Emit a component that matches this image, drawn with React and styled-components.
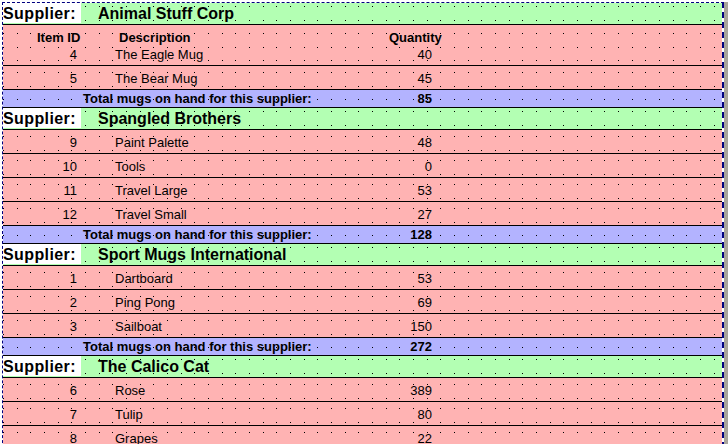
import React from "react";
import styled, { createGlobalStyle } from "styled-components";

const GlobalStyle = createGlobalStyle`
  html, body {
    margin: 0;
    padding: 0;
    height: 444px;
    overflow: hidden;
    background: #fff;
  }
  body {
    font-family: "Liberation Sans", Arial, sans-serif;
    color: #000;
  }
`;

// design-view dot grid, 7 dots per inch
const dotGrid = `url("data:image/svg+xml,%3Csvg xmlns='http://www.w3.org/2000/svg' width='41' height='41' shape-rendering='crispEdges'%3E%3Cpath d='M0 0h1v1H0zM14 0h1v1h-1zM27 0h1v1h-1zM0 14h1v1H0zM14 14h1v1h-1zM27 14h1v1h-1zM0 27h1v1H0zM14 27h1v1h-1zM27 27h1v1h-1z'/%3E%3C/svg%3E")`;

const tones = {
  green: "#b3ffb3",
  pink: "#ffb3b3",
  blue: "#b3b3ff",
};

const Shell = styled.div`
  display: flex;
  margin-top: 2px;
`;

const Report = styled.div`
  width: 719px;
  margin-left: 2px;
  border-top: 1px dashed #000080;
  border-left: 1px dashed #000080;
  border-right: 2px dashed #000080;
`;

const Gutter = styled.div`
  flex: 1;
  background: #a8a49c;
`;

const Section = styled.div`
  background-color: ${p => tones[p.$tone]};
  background-image: ${dotGrid};
  background-repeat: repeat;
  background-position: 0 ${p => p.$dotY}px;
  border-bottom: 1px solid #000;
`;

const Band = styled(Section)`
  display: flex;
  height: 21px;
`;

const SupplierLabel = styled.div`
  width: 78px;
  height: 20px;
  background: #fff;
  font-size: 16px;
  font-weight: bold;
  letter-spacing: 0.4px;
  line-height: 19px;
  padding-top: 1px;
  box-sizing: border-box;
  white-space: nowrap;
`;

const SupplierName = styled.div`
  padding-left: 17px;
  font-size: 16px;
  font-weight: bold;
  line-height: 19px;
  padding-top: 1px;
  white-space: nowrap;
`;

const ColumnHeader = styled.div`
  display: flex;
  height: 17px;
  box-sizing: border-box;
  padding: 5px 0 0 34px;
  font-size: 13px;
  font-weight: bold;
  line-height: 15px;
  white-space: nowrap;
`;

const HeadCell = styled.div`
  width: ${p => (p.$w ? `${p.$w}px` : "auto")};
`;

const ItemRow = styled.div`
  display: grid;
  grid-template-columns: 74px 38px 265px 52px;
  height: 23px;
  box-sizing: border-box;
  padding-top: 2px;
  font-size: 13px;
  line-height: 21px;
  white-space: nowrap;
`;

const Cell = styled.div`
  grid-column: ${p => p.$col};
  text-align: ${p => p.$align || "left"};
`;

const TotalRow = styled(Section)`
  display: grid;
  grid-template-columns: 80px 297px 52px;
  height: 18px;
  box-sizing: border-box;
  padding-bottom: 1px;
  font-size: 13px;
  font-weight: bold;
  line-height: 17px;
  white-space: nowrap;
`;

const suppliers = [
  {
    name: "Animal Stuff Corp",
    items: [
      [4, "The Eagle Mug", 40],
      [5, "The Bear Mug", 45],
    ],
  },
  {
    name: "Spangled Brothers",
    items: [
      [9, "Paint Palette", 48],
      [10, "Tools", 0],
      [11, "Travel Large", 53],
      [12, "Travel Small", 27],
    ],
  },
  {
    name: "Sport Mugs International",
    items: [
      [1, "Dartboard", 53],
      [2, "Ping Pong", 69],
      [3, "Sailboat", 150],
    ],
  },
  {
    name: "The Calico Cat",
    items: [
      [6, "Rose", 389],
      [7, "Tulip", 80],
      [8, "Grapes", 22],
    ],
  },
];

function SupplierGroup({ supplier, showHeader }) {
  const total = supplier.items.reduce((sum, it) => sum + it[2], 0);
  return (
    <>
      <Band $tone="green" $dotY={3}>
        <SupplierLabel>Supplier:</SupplierLabel>
        <SupplierName>{supplier.name}</SupplierName>
      </Band>
      {supplier.items.map(([id, desc, qty], i) => (
        <Section key={id} $tone="pink" $dotY={showHeader && i === 0 ? 8 : 6}>
          {showHeader && i === 0 && (
            <ColumnHeader>
              <HeadCell $w={82}>Item ID</HeadCell>
              <HeadCell $w={270}>Description</HeadCell>
              <HeadCell>Quantity</HeadCell>
            </ColumnHeader>
          )}
          <ItemRow>
            <Cell $col={1} $align="right">{id}</Cell>
            <Cell $col={3}>{desc}</Cell>
            <Cell $col={4} $align="right">{qty}</Cell>
          </ItemRow>
        </Section>
      ))}
      <TotalRow $tone="blue" $dotY={9}>
        <Cell $col={2}>Total mugs on hand for this supplier:</Cell>
        <Cell $col={3} $align="right">{total}</Cell>
      </TotalRow>
    </>
  );
}

export default function App() {
  return (
    <>
      <GlobalStyle />
      <Shell>
        <Report>
          {suppliers.map((s, i) => (
            <SupplierGroup key={s.name} supplier={s} showHeader={i === 0} />
          ))}
        </Report>
        <Gutter />
      </Shell>
    </>
  );
}
